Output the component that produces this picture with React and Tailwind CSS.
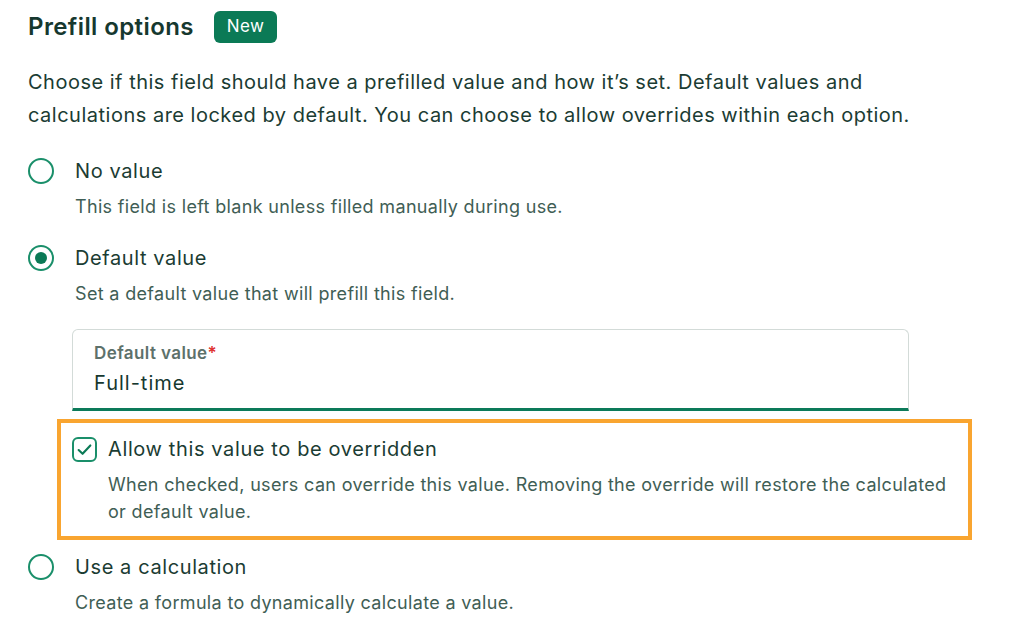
import React from "react";

const font = { fontFamily: "Inter, 'Noto Sans', sans-serif" };

function Radio({ checked }) {
  return (
    <div className="w-[26px] h-[26px] rounded-full border-2 border-[#1a8f6a] flex items-center justify-center shrink-0 bg-white">
      {checked && <div className="w-[12px] h-[12px] rounded-full bg-[#0b7a56]" />}
    </div>
  );
}

function Option({ checked, label, desc }) {
  return (
    <div className="flex">
      <div className="w-[47px] shrink-0 h-[28px] flex items-center">
        <Radio checked={checked} />
      </div>
      <div>
        <div className="text-[20px] leading-[28px] tracking-[0.6px] text-[#1b3c33]">{label}</div>
        <div className="mt-[9px] text-[18px] leading-[26px] tracking-[0.33px] text-[#3f5e55]">{desc}</div>
      </div>
    </div>
  );
}

export default function App() {
  return (
    <div className="bg-white w-[1033px] h-[638px] overflow-hidden pl-[28px] pt-[11px]" style={font}>
      <div className="flex items-center h-[32px]">
        <h2 className="text-[24px] font-semibold text-[#16382f] tracking-[0.4px]">Prefill options</h2>
        <span className="ml-[20px] h-[32px] px-[13px] rounded-[6px] bg-[#0b7a56] text-white text-[17px] tracking-[0.4px] flex items-center">New</span>
      </div>
      <p className="mt-[23px] w-[930px] text-[20px] leading-[33px] tracking-[0.5px] text-[#1b3c33]">
        Choose if this field should have a prefilled value and how it’s set. Default values and calculations are locked by default. You can choose to allow overrides within each option.
      </p>
      <div className="mt-[25px]">
        <Option label="No value" desc="This field is left blank unless filled manually during use." />
      </div>
      <div className="mt-[24px]">
        <Option checked label="Default value" desc="Set a default value that will prefill this field." />
      </div>
      <div className="ml-[44px] mt-[22px] w-[837px] h-[82px] rounded-t-[6px] border-[1.5px] border-b-0 border-[#d3dbd8] border-b-[3px] border-b-[#0c7a59] px-[21px] pt-[12px]">
        <div className="text-[17px] leading-[22px] font-semibold tracking-[0.4px] text-[#5d716b]">
          Default value<span className="text-[#e0312f]">*</span>
        </div>
        <div className="mt-[5px] text-[20px] leading-[28px] tracking-[1px] text-[#16382f]">Full-time</div>
      </div>
      <div className="ml-[29px] mt-[8px] w-[915px] border-[4px] border-[#f9a530] pl-[11px] pt-[12px] pb-[11px]">
        <div className="flex">
          <div className="w-[36px] shrink-0 h-[28px] flex items-center">
            <div className="w-[25px] h-[25px] rounded-[6px] border-2 border-[#1a8f6a] flex items-center justify-center">
              <svg width="17" height="17" viewBox="0 0 16 16" fill="none">
                <path d="M2.5 8.5 L6.2 12 L13.5 4.2" stroke="#0b7a56" strokeWidth="2" strokeLinecap="round" strokeLinejoin="round" />
              </svg>
            </div>
          </div>
          <div>
            <div className="text-[20px] leading-[28px] tracking-[0.62px] text-[#1b3c33]">Allow this value to be overridden</div>
            <div className="mt-[8px] text-[18px] leading-[27px] tracking-[0.33px] text-[#3f5e55] w-[850px]">
              When checked, users can override this value. Removing the override will restore the calculated or default value.
            </div>
          </div>
        </div>
      </div>
      <div className="mt-[13px]">
        <Option label="Use a calculation" desc="Create a formula to dynamically calculate a value." />
      </div>
    </div>
  );
}
